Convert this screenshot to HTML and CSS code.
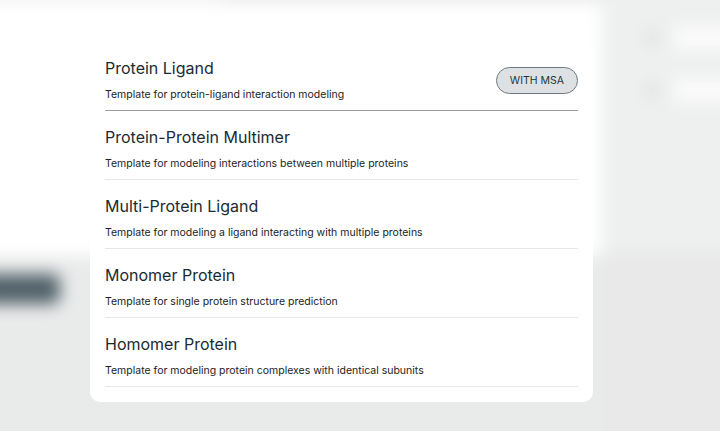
FILE: index.html
```html
<!DOCTYPE html>
<html lang="en">
<head>
<meta charset="UTF-8" />
<meta name="viewport" content="width=device-width, initial-scale=1" />
<title>Templates</title>
<link rel="stylesheet" href="styles.css">
</head>
<body>
<div class="screen">
  <!-- blurred page behind the dialog -->
  <div class="backdrop" aria-hidden="true">
    <div class="main-pane">
      <div class="pane-strip"></div>
      <div class="pane-top"></div>
      <div class="pane-gap"></div>
      <div class="ghost-btn"></div>
    </div>
    <div class="side-pane">
      <div class="side-box">
        <div class="side-row"><span class="dot"></span><span class="bar"></span></div>
        <div class="side-row"><span class="dot"></span><span class="bar"></span></div>
      </div>
    </div>
  </div>

  <div class="dialog">
    <ul class="template-list">
      <li class="template">
        <div class="template-text">
          <h3 class="template-title">Protein Ligand</h3>
          <p class="template-desc">Template for protein-ligand interaction modeling</p>
        </div>
        <span class="badge">WITH MSA</span>
      </li>
      <li class="template">
        <div class="template-text">
          <h3 class="template-title">Protein-Protein Multimer</h3>
          <p class="template-desc">Template for modeling interactions between multiple proteins</p>
        </div>
      </li>
      <li class="template">
        <div class="template-text">
          <h3 class="template-title">Multi-Protein Ligand</h3>
          <p class="template-desc">Template for modeling a ligand interacting with multiple proteins</p>
        </div>
      </li>
      <li class="template">
        <div class="template-text">
          <h3 class="template-title">Monomer Protein</h3>
          <p class="template-desc">Template for single protein structure prediction</p>
        </div>
      </li>
      <li class="template">
        <div class="template-text">
          <h3 class="template-title">Homomer Protein</h3>
          <p class="template-desc">Template for modeling protein complexes with identical subunits</p>
        </div>
      </li>
    </ul>
  </div>
</div>
</body>
</html>
```

FILE: styles.css
```css
* {
  box-sizing: border-box;
}
body {
  margin: 0;
  font-family: Inter, "Noto Sans", sans-serif;
  background: #e8e9e8;
}
.screen {
  position: relative;
  width: 720px;
  height: 431px;
  overflow: hidden;
}

/* background page, blurred */
.backdrop {
  display: grid;
  grid-template-columns: 622px 140px;
  margin: -20px 0 0 -20px;
  height: 471px;
  filter: blur(8px);
}
.main-pane {
  display: flex;
  flex-direction: column;
  background: #e9eaea;
}
.pane-strip {
  width: 240px;
  height: 24px;
  background: #f1f2f1;
}
.pane-top {
  height: 254px;
  background: #fff;
  margin-top: -2px;
}
.pane-gap {
  height: 18px;
}
.ghost-btn {
  width: 80px;
  height: 30px;
  border-radius: 8px;
  background: #52626a;
}
.side-pane {
  background: #e8e9e8;
}
.side-box {
  height: 272px;
  background: #eeefef;
  padding: 46px 0 0 44px;
  display: flex;
  flex-direction: column;
  gap: 28px;
}
.side-row {
  display: flex;
  align-items: center;
  gap: 16px;
}
.dot {
  width: 16px;
  height: 16px;
  border-radius: 50%;
  background: #dcdede;
}
.bar {
  width: 90px;
  height: 24px;
  border-radius: 4px;
  background: #fbfbfb;
}

/* dialog */
.dialog {
  position: absolute;
  left: 90px;
  top: 42px;
  width: 503px;
  background: #fff;
  border-radius: 10px;
  padding: 0 15px 15px;
}
.template-list {
  list-style: none;
  margin: 0;
  padding: 0;
}
.template {
  display: flex;
  align-items: center;
  justify-content: space-between;
  padding: 15px 0 7px;
  border-bottom: 1px solid #e6e7ea;
}
.template:first-child {
  border-bottom-color: #9a9c9e;
}
.template-title {
  margin: 0;
  font-size: 16px;
  line-height: 22px;
  font-weight: 400;
  color: #1b2a33;
}
.template-desc {
  margin: 8px 0 0;
  font-size: 10.5px;
  line-height: 16px;
  color: #222;
}
.badge {
  padding: 0 13px;
  height: 27px;
  line-height: 25px;
  border: 1px solid #6f7a80;
  border-radius: 14px;
  background: #dde1e3;
  font-size: 10.5px;
  font-weight: 400;
  color: #26353c;
}
```
